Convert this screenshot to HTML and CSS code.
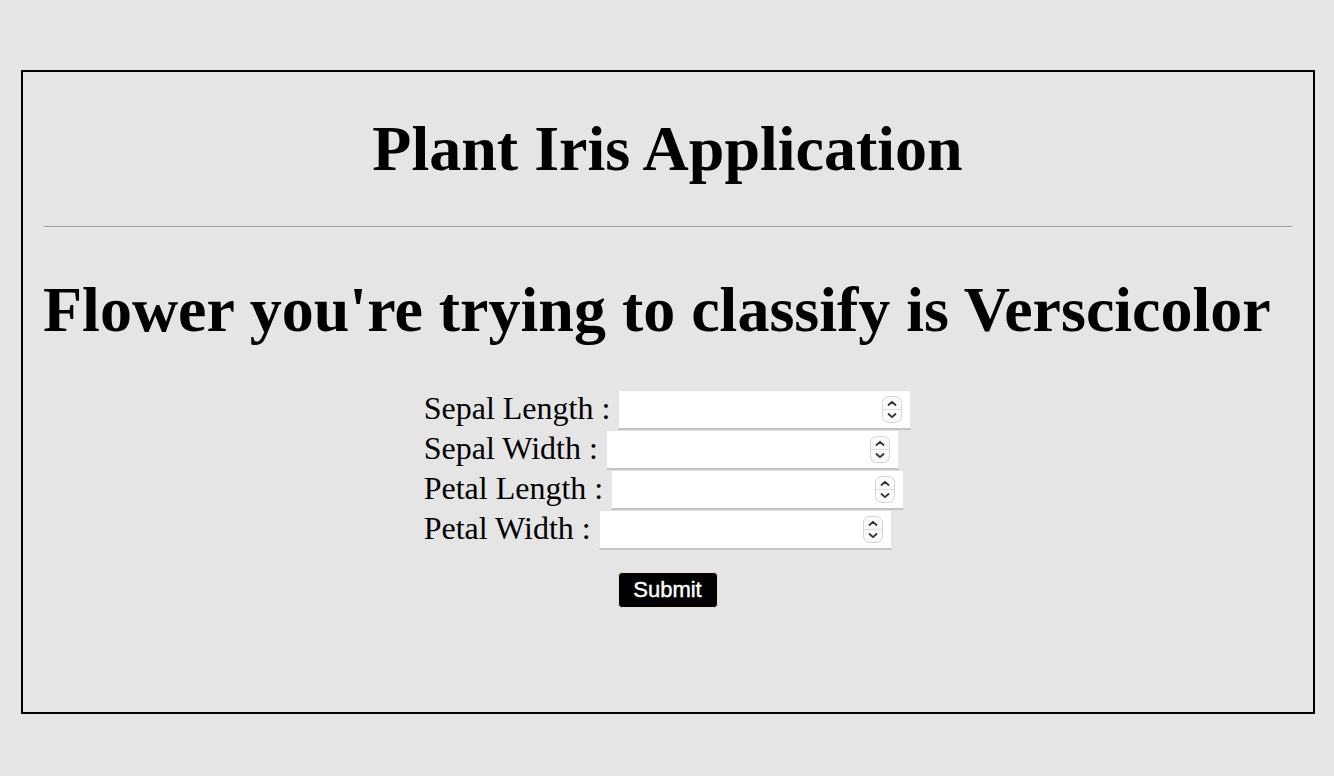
FILE: index.html
```html
<!DOCTYPE html>
<html lang="en">
<head>
<meta charset="utf-8">
<title>Plant Iris Application</title>
<link rel="stylesheet" href="styles.css">
</head>
<body>
<div class="panel">
  <h1 class="title">Plant Iris Application</h1>
  <hr class="rule">
  <h1 class="result">Flower you're trying to classify is Verscicolor</h1>
  <div class="form-wrap">
    <form class="form">
      <div class="row">
        <label class="label" for="sl">Sepal Length :</label>
        <span class="field"><input class="num" id="sl" type="text"><svg class="spin" width="20" height="27" viewBox="0 0 20 27"><rect x="0.5" y="0.5" width="19" height="26" rx="6" fill="#fafafa" stroke="#d4d4d4"/><line x1="1" y1="13.5" x2="19" y2="13.5" stroke="#e0e0e0"/><path d="M6.5 9 L10 5.8 L13.5 9" fill="none" stroke="#333" stroke-width="1.8" stroke-linecap="round" stroke-linejoin="round"/><path d="M6.5 18 L10 21.2 L13.5 18" fill="none" stroke="#333" stroke-width="1.8" stroke-linecap="round" stroke-linejoin="round"/></svg></span>
      </div>
      <div class="row">
        <label class="label" for="sw">Sepal Width :</label>
        <span class="field"><input class="num" id="sw" type="text"><svg class="spin" width="20" height="27" viewBox="0 0 20 27"><rect x="0.5" y="0.5" width="19" height="26" rx="6" fill="#fafafa" stroke="#d4d4d4"/><line x1="1" y1="13.5" x2="19" y2="13.5" stroke="#e0e0e0"/><path d="M6.5 9 L10 5.8 L13.5 9" fill="none" stroke="#333" stroke-width="1.8" stroke-linecap="round" stroke-linejoin="round"/><path d="M6.5 18 L10 21.2 L13.5 18" fill="none" stroke="#333" stroke-width="1.8" stroke-linecap="round" stroke-linejoin="round"/></svg></span>
      </div>
      <div class="row">
        <label class="label" for="pl">Petal Length :</label>
        <span class="field"><input class="num" id="pl" type="text"><svg class="spin" width="20" height="27" viewBox="0 0 20 27"><rect x="0.5" y="0.5" width="19" height="26" rx="6" fill="#fafafa" stroke="#d4d4d4"/><line x1="1" y1="13.5" x2="19" y2="13.5" stroke="#e0e0e0"/><path d="M6.5 9 L10 5.8 L13.5 9" fill="none" stroke="#333" stroke-width="1.8" stroke-linecap="round" stroke-linejoin="round"/><path d="M6.5 18 L10 21.2 L13.5 18" fill="none" stroke="#333" stroke-width="1.8" stroke-linecap="round" stroke-linejoin="round"/></svg></span>
      </div>
      <div class="row">
        <label class="label" for="pw">Petal Width :</label>
        <span class="field"><input class="num" id="pw" type="text"><svg class="spin" width="20" height="27" viewBox="0 0 20 27"><rect x="0.5" y="0.5" width="19" height="26" rx="6" fill="#fafafa" stroke="#d4d4d4"/><line x1="1" y1="13.5" x2="19" y2="13.5" stroke="#e0e0e0"/><path d="M6.5 9 L10 5.8 L13.5 9" fill="none" stroke="#333" stroke-width="1.8" stroke-linecap="round" stroke-linejoin="round"/><path d="M6.5 18 L10 21.2 L13.5 18" fill="none" stroke="#333" stroke-width="1.8" stroke-linecap="round" stroke-linejoin="round"/></svg></span>
      </div>
      <div class="actions">
        <button class="submit" type="button">Submit</button>
      </div>
    </form>
  </div>
</div>
</body>
</html>
```
FILE: styles.css
```css
html, body {
  margin: 0;
  padding: 0;
  background: #e5e5e5;
}

body {
  font-family: "Liberation Serif", "Times New Roman", serif;
  color: #000;
  padding: 70px 19px 63px 21px;
}

.panel {
  border: 2px solid #000;
  padding: 0 21px 104px 20px;
}

.title,
.result {
  font-size: 64px;
  font-weight: bold;
  line-height: 72px;
  margin: 0;
}

.title {
  text-align: center;
  margin-top: 41px;
}

.rule {
  margin: 41px 0 0 1px;
  border: 0;
  border-top: 1px solid #999;
  border-bottom: 1px solid #eee;
  height: 0;
}

.result {
  margin-top: 46px;
  white-space: nowrap;
}

.form-wrap {
  text-align: center;
  margin-top: 44px;
}

.form {
  display: inline-block;
  text-align: left;
  margin: 0;
}

.row {
  display: flex;
  align-items: center;
  height: 40px;
  gap: 8px;
}

.label {
  font-size: 32px;
  line-height: 40px;
  margin-bottom: 5px;
}

.field {
  display: flex;
  align-items: center;
  box-sizing: border-box;
  width: 293px;
  height: 40px;
  background: #fff;
  border-top: 1px solid #e0e0e0;
  border-bottom: 2px solid #c4c4c4;
  border-left: 1px solid #e6e6e6;
  border-right: 1px solid #e6e6e6;
  padding: 0 8px 0 4px;
}

.num {
  flex: 1;
  min-width: 0;
  border: 0;
  outline: none;
  background: transparent;
  font-size: 22px;
  font-family: "Liberation Sans", Arial, sans-serif;
}

.spin {
  display: block;
  flex: none;
}

.actions {
  text-align: center;
  margin-top: 22px;
}

.submit {
  box-sizing: border-box;
  width: 100px;
  height: 36px;
  background: #000;
  color: #fff;
  border: 1px solid #f3dfb8;
  border-radius: 4px;
  font-family: "Liberation Sans", Arial, sans-serif;
  font-size: 22px;
  -webkit-text-stroke: 0.4px #fff;
  padding: 0;
  line-height: 34px;
}
```
